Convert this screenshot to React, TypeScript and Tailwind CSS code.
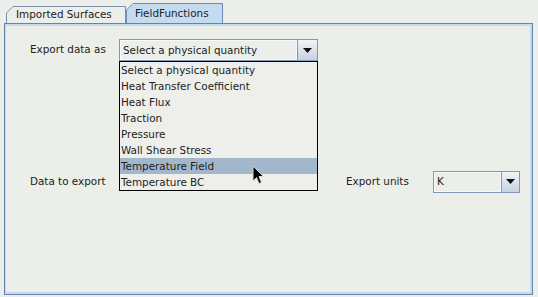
import React from "react";

function Arrow() {
  return (
    <svg width="9" height="5" viewBox="0 0 9 5">
      <path d="M0 0 H9 L4.5 5 Z" fill="#111" />
    </svg>
  );
}

function Combo({ text, width, btn }: { text: string; width: number; btn: number }) {
  return (
    <div
      className="flex h-[22px] border border-[#8398b6] bg-[#eceee9]"
      style={{ width }}
    >
      <div className="flex-1 flex items-center border border-[#f7f9fb] pl-[2px] text-[#222] leading-none">
        {text}
      </div>
      <div
        className="flex items-center justify-center border-l border-[#8398b6] bg-gradient-to-b from-[#f2f4f7] to-[#c6d3e1]"
        style={{ width: btn }}
      >
        <Arrow />
      </div>
    </div>
  );
}

function Tab({ label, selected, width }: { label: string; selected?: boolean; width: number }) {
  const h = selected ? 20 : 17;
  return (
    <div className="relative" style={{ width, height: h }}>
      <svg className="absolute inset-0" width={width} height={h} viewBox={`0 0 ${width} ${h}`}>
        <path
          d={`M0.5 ${h + 1} V7 L7 0.5 H${width - 0.5} V${h + 1}`}
          fill={selected ? "#c4dbf0" : "#eceee9"}
          stroke={selected ? "#6b8ab5" : "#7c90aa"}
          strokeWidth="1"
        />
      </svg>
      <div
        className={`relative h-full flex items-center ${selected ? "pl-[9px] pt-[1px]" : "pl-[10px] pt-[1px]"} text-[#222]`}
      >
        {label}
      </div>
    </div>
  );
}

const items = [
  "Select a physical quantity",
  "Heat Transfer Coefficient",
  "Heat Flux",
  "Traction",
  "Pressure",
  "Wall Shear Stress",
  "Temperature Field",
  "Temperature BC",
];

export default function App() {
  return (
    <div className="w-[538px] h-[297px] bg-[#eceee9] overflow-hidden relative font-['DejaVu_Sans',sans-serif] text-[10.4px]">
      <div className="flex items-end pl-[6px] pt-[4px] h-[23px]">
        <Tab label="Imported Surfaces" width={120} />
        <Tab label="FieldFunctions" selected width={97} />
      </div>
      <div className="ml-[4px] w-[529px] h-[272px] border border-[#6683ad]">
        <div className="relative h-full border-t-2 border-l border-r-2 border-b-2 border-[#c3d9ef] border-t-[#c4dbf0]">
          <div className="pt-[13px]">
            <div className="flex items-center h-[22px]">
              <div className="w-[89px] ml-[24px] text-[#222]">Export data as</div>
              <Combo text="Select a physical quantity" width={199} btn={20} />
            </div>
            <div className="flex items-center h-[21px] mt-[110px]">
              <div className="w-[89px] ml-[24px] text-[#222]">Data to export</div>
              <div className="w-[199px]" />
              <div className="w-[87px] ml-[28px] text-[#222]">Export units</div>
              <Combo text="K" width={87} btn={18} />
            </div>
          </div>

          {/* popup list */}
          <div className="absolute left-[113px] top-[35px] w-[199px] border border-black bg-[#eeefeb]">
            {items.map((t) => (
              <div
                key={t}
                className={`h-[16px] flex items-center pl-[1px] pt-[1px] text-[#222] ${
                  t === "Temperature Field" ? "bg-[#a2b7cb]" : ""
                }`}
              >
                {t}
              </div>
            ))}
          </div>

          {/* mouse cursor */}
          <svg
            className="absolute left-[246px] top-[139px]"
            width="13"
            height="20"
            viewBox="0 0 13 20"
          >
            <path
              d="M1 1 L1 16 L4.5 12.5 L7 18.5 L9.5 17.5 L7 11.5 L11.5 11.5 Z"
              fill="#000"
              stroke="#d8d8d8"
              strokeWidth="1"
              strokeLinejoin="round"
            />
          </svg>
        </div>
      </div>
    </div>
  );
}
